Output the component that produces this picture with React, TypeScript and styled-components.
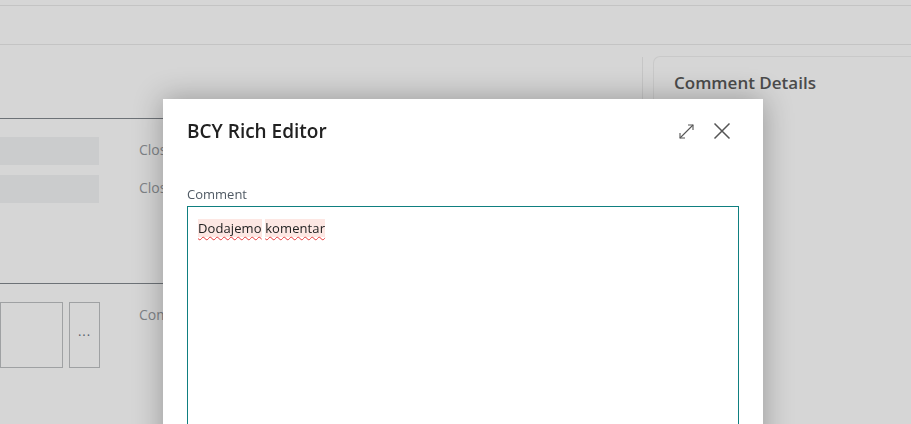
import styled, { createGlobalStyle } from "styled-components"

const Global = createGlobalStyle`
  html, body {
    margin: 0;
    padding: 0;
    background: #d6d6d6;
    font-family: "Open Sans", "Noto Sans", sans-serif;
    overflow: hidden;
  }
`

const Page = styled.div`
  width: 911px;
  height: 424px;
  display: flex;
  flex-direction: column;
  background: #d6d6d6;
`

const TopStrip = styled.div`
  height: 5px;
  border-bottom: 1px solid #c4c4c4;
`

const ActionBar = styled.div`
  height: 38px;
  border-bottom: 1px solid #c4c4c4;
`

const Content = styled.div`
  flex: 1;
  display: flex;
`

const LeftPane = styled.div`
  width: 642px;
  padding-top: 73px;
  box-sizing: border-box;
`

const Divider = styled.div`
  width: 1px;
  margin-top: 12px;
  background: #c6c6c6;
`

const Section = styled.section`
  border-top: 1px solid #6d7277;
  padding-top: 18px;
  display: flex;
  flex-direction: column;
  gap: 10px;
`

const Row = styled.div`
  display: flex;
  align-items: flex-start;
`

const FieldCell = styled.div`
  width: 139px;
  display: flex;
  gap: 6px;
`

const Filled = styled.div`
  width: 99px;
  height: 28px;
  background: #cbcccd;
`

const Outlined = styled.div<{ w: number }>`
  width: ${({ w }) => w}px;
  height: 64px;
  border: 1px solid #9fa1a3;
  display: flex;
  align-items: center;
  justify-content: center;
  color: #56606b;
  font-size: 13px;
  letter-spacing: 1px;
`

const FieldLabel = styled.span`
  font-size: 14px;
  line-height: 28px;
  color: #7f8387;
  margin-top: -1px;
  white-space: nowrap;
`

const Spacer = styled.div<{ h: number }>`
  height: ${({ h }) => h}px;
`

const RightPane = styled.div`
  flex: 1;
  padding: 11px 0 0 10px;
`

const Card = styled.div`
  height: 100%;
  border: 1px solid #c9c9c9;
  border-right: none;
  border-bottom: none;
  border-radius: 7px 0 0 0;
  padding: 14px 20px;
  box-sizing: border-box;
`

const CardTitle = styled.h2`
  margin: 0;
  font-size: 17px;
  font-weight: 600;
  color: #4b4b4b;
`

const Modal = styled.div`
  position: fixed;
  left: 163px;
  top: 99px;
  width: 600px;
  height: 420px;
  background: #fff;
  box-shadow: 0 0 28px rgba(0, 0, 0, 0.3);
  padding: 0 24px;
  box-sizing: border-box;
`

const ModalHeader = styled.header`
  height: 64px;
  display: flex;
  align-items: center;
  justify-content: space-between;
`

const ModalTitle = styled.h1`
  margin: 0;
  font-size: 19px;
  font-weight: 600;
  color: #212121;
`

const HeaderActions = styled.div`
  display: flex;
  gap: 18px;
  margin-right: 8px;
  align-items: center;
`

const IconButton = styled.button`
  width: 18px;
  height: 18px;
  padding: 0;
  border: none;
  background: none;
  display: flex;
  align-items: center;
  justify-content: center;
  color: #555;
`

const FieldTitle = styled.label`
  display: block;
  margin-top: 20px;
  font-size: 13px;
  color: #505a64;
  line-height: 22px;
`

const Editor = styled.div`
  margin-top: 1px;
  width: 552px;
  height: 260px;
  border: 1px solid #0f7f80;
  padding: 10px 10px;
  box-sizing: border-box;
  font-size: 13px;
  letter-spacing: 0.1px;
  color: #212121;
  line-height: 22px;
`

const Misspelled = styled.span`
  background: #fde7e3;
  text-decoration: underline wavy #e83a3a;
  text-decoration-skip-ink: none;
  text-underline-offset: 3px;
  text-decoration-thickness: 1px;
`

function ExpandIcon() {
  return (
    <svg width="17" height="17" viewBox="0 0 17 17" fill="none" stroke="currentColor" strokeWidth="1.1">
      <path d="M2 15 L15 2" />
      <path d="M10 2 H15 V7" />
      <path d="M2 10 V15 H7" />
    </svg>
  )
}

function CloseIcon() {
  return (
    <svg width="18" height="18" viewBox="0 0 18 18" fill="none" stroke="currentColor" strokeWidth="1.5">
      <path d="M1.5 1.5 L16.5 16.5 M16.5 1.5 L1.5 16.5" />
    </svg>
  )
}

export default function App() {
  return <>
    <Global />
    <Page>
      <TopStrip />
      <ActionBar />
      <Content>
        <LeftPane>
          <Section>
            <Row>
              <FieldCell><Filled /></FieldCell>
              <FieldLabel>Closed</FieldLabel>
            </Row>
            <Row>
              <FieldCell><Filled /></FieldCell>
              <FieldLabel>Closed</FieldLabel>
            </Row>
            <Spacer h={70} />
          </Section>
          <Section>
            <Row>
              <FieldCell>
                <Outlined w={61} />
                <Outlined w={29}>···</Outlined>
              </FieldCell>
              <FieldLabel>Comment</FieldLabel>
            </Row>
          </Section>
        </LeftPane>
        <Divider />
        <RightPane>
          <Card>
            <CardTitle>Comment Details</CardTitle>
          </Card>
        </RightPane>
      </Content>
    </Page>
    <Modal role="dialog">
      <ModalHeader>
        <ModalTitle>BCY Rich Editor</ModalTitle>
        <HeaderActions>
          <IconButton aria-label="Expand"><ExpandIcon /></IconButton>
          <IconButton aria-label="Close"><CloseIcon /></IconButton>
        </HeaderActions>
      </ModalHeader>
      <FieldTitle>Comment</FieldTitle>
      <Editor>
        <Misspelled>Dodajemo</Misspelled> <Misspelled>komentar</Misspelled>
      </Editor>
    </Modal>
  </>
}
